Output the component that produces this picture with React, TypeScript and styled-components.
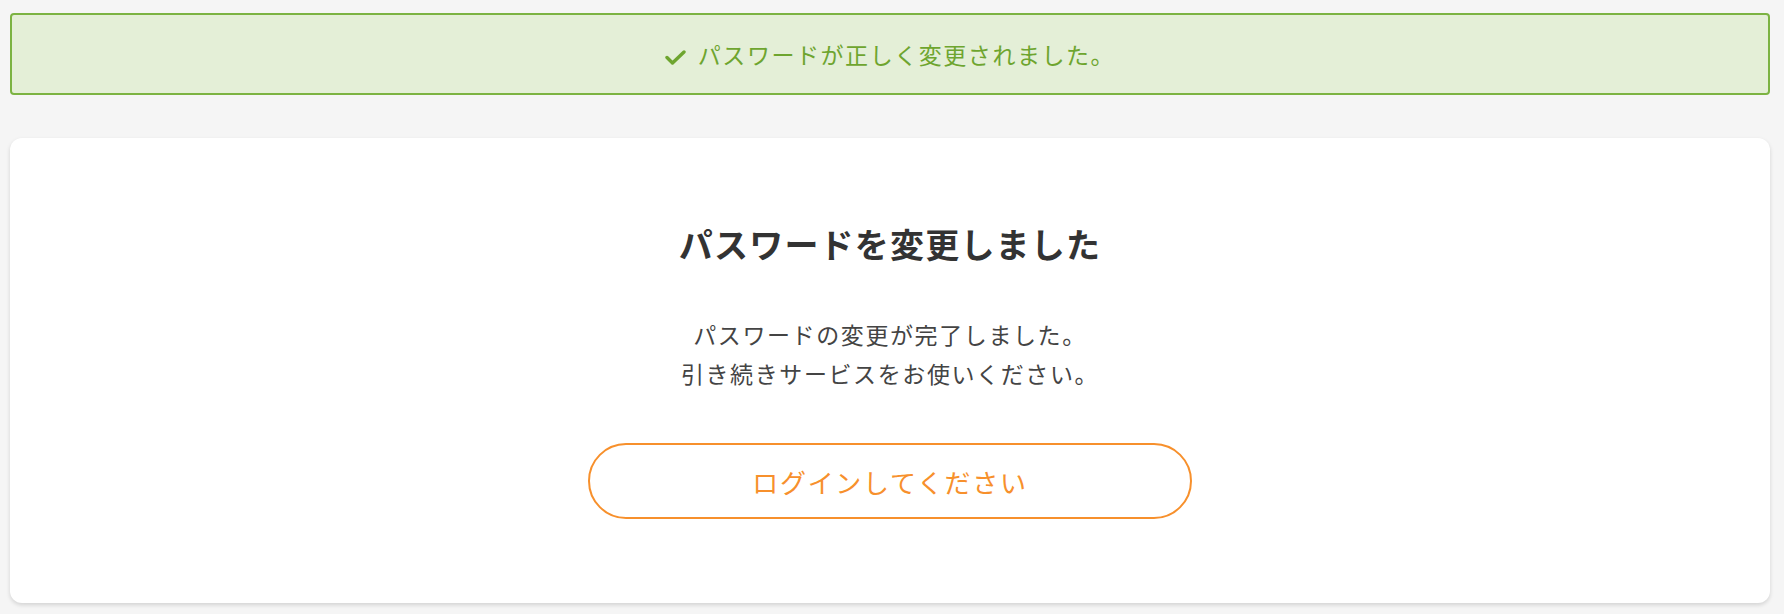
import React from 'react';
import styled, { createGlobalStyle } from 'styled-components';

const GlobalStyle = createGlobalStyle`
  html, body {
    margin: 0;
    padding: 0;
    background: #f5f5f5;
  }
  body {
    font-family: "Noto Sans CJK JP", "Noto Sans", sans-serif;
    color: #333;
  }
`;

const Page = styled.div`
  padding: 13px 14px 11px 10px;
  display: flex;
  flex-direction: column;
  gap: 43px;
`;

const Alert = styled.div`
  height: 82px;
  box-sizing: border-box;
  border: 2px solid #7cb342;
  border-radius: 4px;
  background: #e4efd7;
  color: #6ea52f;
  display: flex;
  align-items: center;
  justify-content: center;
  gap: 12px;
  font-size: 23px;
  letter-spacing: 1.55px;
`;

const CheckIcon = () => (
  <svg width="21" height="15" viewBox="0 0 21 15" style={{ marginTop: 6 }}>
    <path
      d="M2 7.5 L7.5 13 L19 2"
      fill="none"
      stroke="#6ea52f"
      strokeWidth="3.4"
      strokeLinecap="round"
      strokeLinejoin="round"
    />
  </svg>
);

const Card = styled.div`
  background: #fff;
  border-radius: 12px;
  box-shadow: 0 2px 4px rgba(0, 0, 0, 0.14);
  padding: 80px 20px 84px;
  display: flex;
  flex-direction: column;
  align-items: center;
`;

const Title = styled.h1`
  margin: 0;
  font-size: 34px;
  line-height: 51px;
  font-weight: 700;
  color: #333;
  letter-spacing: 1.2px;
`;

const Message = styled.p`
  margin: 46px 0 0;
  font-size: 23px;
  line-height: 39px;
  color: #444;
  text-align: center;
  letter-spacing: 1.6px;
`;

const LoginButton = styled.button`
  margin-top: 50px;
  width: 604px;
  height: 76px;
  box-sizing: border-box;
  border: 2px solid #f7902c;
  border-radius: 38px;
  background: #fff;
  color: #f7902c;
  font-family: inherit;
  font-size: 26px;
  letter-spacing: 1.7px;
  cursor: pointer;
`;

export default function App() {
  return (
    <>
      <GlobalStyle />
      <Page>
        <Alert>
          <CheckIcon />
          <span>パスワードが正しく変更されました。</span>
        </Alert>
        <Card>
          <Title>パスワードを変更しました</Title>
          <Message>
            パスワードの変更が完了しました。
            <br />
            引き続きサービスをお使いください。
          </Message>
          <LoginButton>ログインしてください</LoginButton>
        </Card>
      </Page>
    </>
  );
}
